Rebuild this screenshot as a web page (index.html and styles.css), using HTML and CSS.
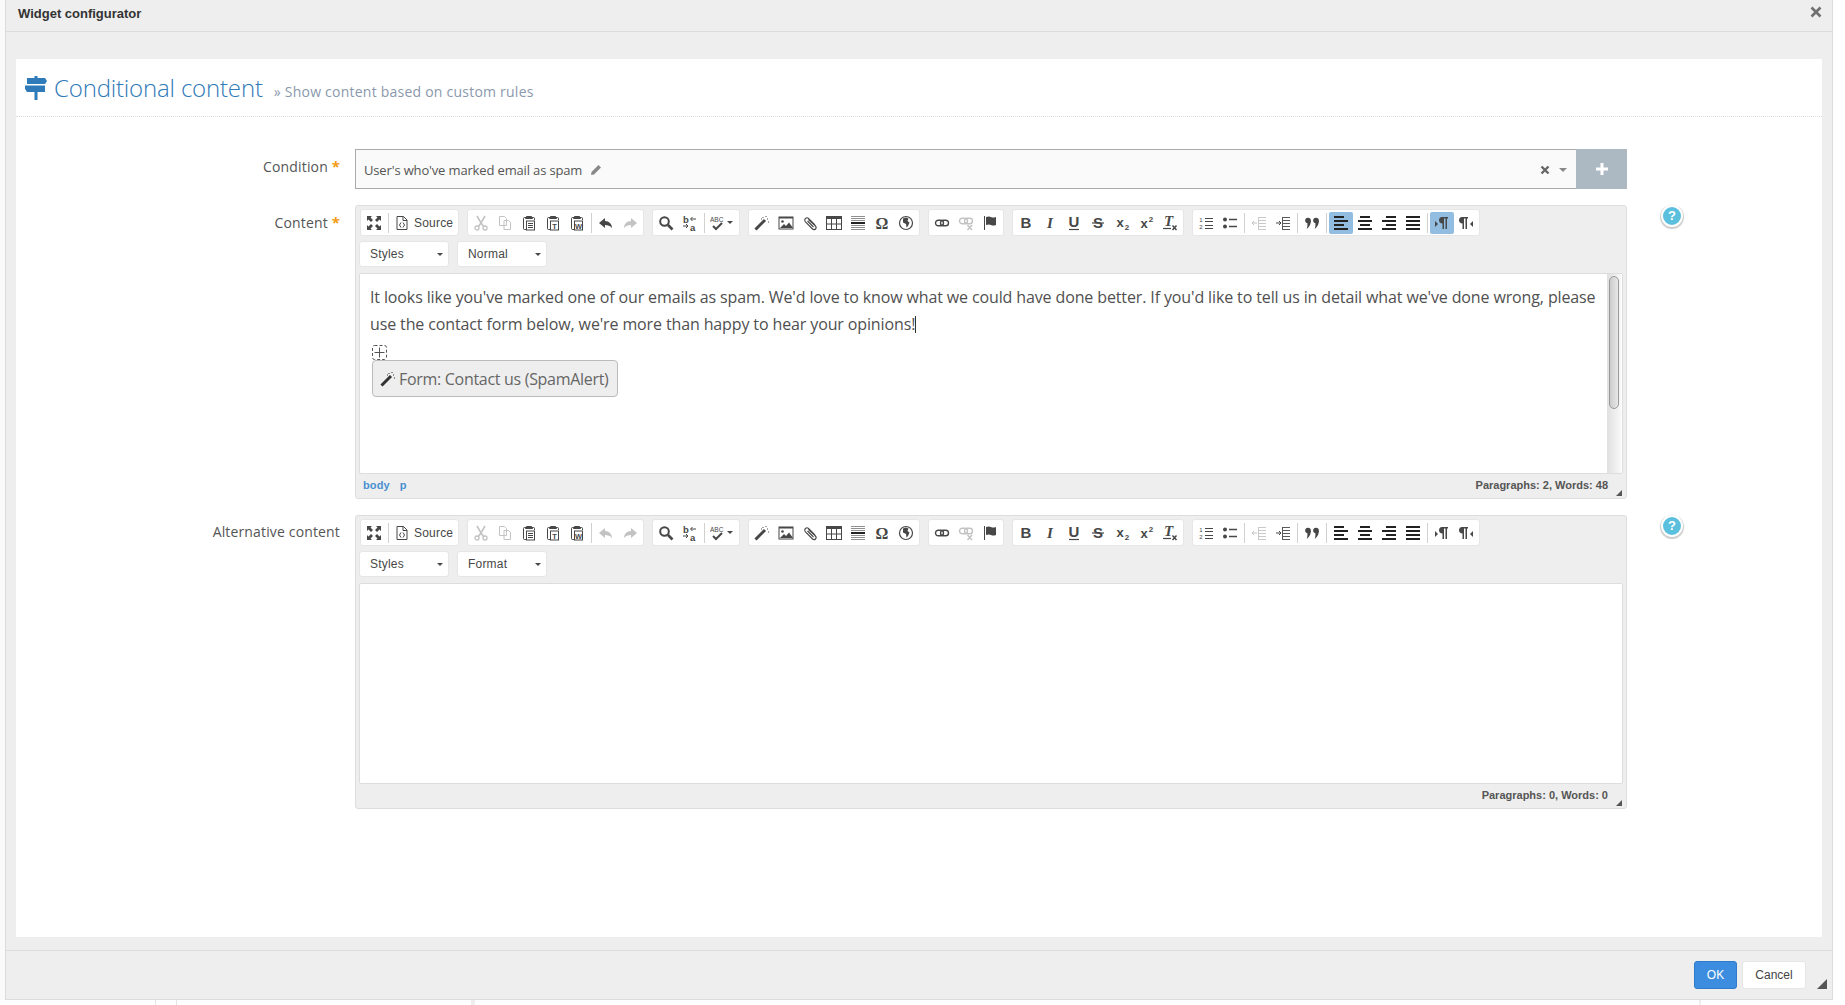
FILE: index.html
```html
<!DOCTYPE html>
<html lang="en">
<head>
<meta charset="utf-8">
<title>Widget configurator</title>
<link rel="stylesheet" href="styles.css">
</head>
<body>
<svg class="sprite" width="0" height="0" aria-hidden="true">
<defs>
<symbol id="i-max" viewBox="0 0 16 16"><path d="M1 1h5L4.500 2.500 7 5 5 7 2.500 4.500 1 6zM15 1v5l-1.500-1.500L11 7 9 5l2.500-2.500L10 1zM1 15v-5l1.500 1.500L5 9l2 2-2.500 2.500L6 15zM15 15h-5l1.500-1.500L9 11l2-2 2.500 2.500L15 10z" fill="currentColor"/></symbol>
<symbol id="i-source" viewBox="0 0 16 16"><path d="M3 1.500h6.500L13 5v9.500H3z" fill="none" stroke="currentColor"/><path d="M9 1.500V5.500h4" fill="none" stroke="currentColor"/><path d="M7 7.500 5.500 10 7 12.500M9 7.500l1.500 2.500L9 12.500" fill="none" stroke="currentColor"/></symbol>
<symbol id="i-cut" viewBox="0 0 16 16"><path d="M4 1l4 7 4-7M8 8l-3 4M8 8l3 4" fill="none" stroke="currentColor" stroke-width="1.600"/><circle cx="4" cy="13" r="2" fill="none" stroke="currentColor" stroke-width="1.300"/><circle cx="12" cy="13" r="2" fill="none" stroke="currentColor" stroke-width="1.300"/></symbol>
<symbol id="i-copy" viewBox="0 0 16 16"><path d="M2.500 1.500h5l2 2v7h-7zM7 5.500h4.500l2 2v7H7z" fill="#fff" stroke="currentColor"/></symbol>
<symbol id="i-paste" viewBox="0 0 16 16"><path d="M5 2.500H3.500q-1 0-1 1v10q0 1 1 1H5" fill="none" stroke="currentColor"/><path d="M5.500 1.500h5l1 2h-7z" fill="currentColor" stroke="currentColor"/><path d="M11 2.500h1.500q1 0 1 1V5" fill="none" stroke="currentColor"/><rect x="5.500" y="6" width="8" height="9" fill="#fff" stroke="currentColor"/><path d="M7 8.500h5M7 10.500h5M7 12.500h5" stroke="currentColor"/></symbol>
<symbol id="i-pastet" viewBox="0 0 16 16"><path d="M5 2.500H3.500q-1 0-1 1v10q0 1 1 1H5" fill="none" stroke="currentColor"/><path d="M5.500 1.500h5l1 2h-7z" fill="currentColor" stroke="currentColor"/><path d="M11 2.500h1.500q1 0 1 1V5" fill="none" stroke="currentColor"/><rect x="5.500" y="6" width="8" height="9" fill="#fff" stroke="currentColor"/><text x="9.500" y="13.500" class="ic-t">T</text></symbol>
<symbol id="i-pastew" viewBox="0 0 16 16"><path d="M5 2.500H3.500q-1 0-1 1v10q0 1 1 1H5" fill="none" stroke="currentColor"/><path d="M5.500 1.500h5l1 2h-7z" fill="currentColor" stroke="currentColor"/><path d="M11 2.500h1.500q1 0 1 1V5" fill="none" stroke="currentColor"/><rect x="5.500" y="6" width="8" height="9" fill="#fff" stroke="currentColor"/><text x="9.500" y="13.500" class="ic-t">W</text></symbol>
<symbol id="i-undo" viewBox="0 0 16 16"><path d="M7 3 1 8l6 5v-3c3 0 5 .8 7 3 0-4-3-7-7-7z" fill="currentColor"/></symbol>
<symbol id="i-redo" viewBox="0 0 16 16"><path d="M9 3l6 5-6 5v-3c-3 0-5 .8-7 3 0-4 3-7 7-7z" fill="currentColor"/></symbol>
<symbol id="i-find" viewBox="0 0 16 16"><circle cx="6.500" cy="6.500" r="4.300" fill="none" stroke="currentColor" stroke-width="2"/><path d="M10 10l4.500 4.500" stroke="currentColor" stroke-width="2.600"/></symbol>
<symbol id="i-replace" viewBox="0 0 16 16"><text x="1" y="7.500" class="ic-b">b</text><text x="8" y="15.500" class="ic-b">a</text><path d="M9 4h5M10.500 2 8.500 4l2 2M1 11h5M4 9l2 2-2 2" fill="none" stroke="currentColor"/></symbol>
<symbol id="i-spell" viewBox="0 0 16 16"><text x="0" y="7" class="ic-s">ABC</text><path d="M3 11l3 3 6-6" fill="none" stroke="currentColor" stroke-width="2"/></symbol>
<symbol id="i-wand" viewBox="0 0 16 16"><path d="M1.500 14.500 11 5" stroke="currentColor" stroke-width="3"/><path d="M9 2v2M12 1v2M14 4h-2M15 7h-2M7 4h1" stroke="currentColor" stroke-dasharray="1 1"/></symbol>
<symbol id="i-image" viewBox="0 0 16 16"><rect x="1" y="2" width="14" height="12" fill="#fff" stroke="currentColor"/><rect x="1" y="2" width="14" height="1.500" fill="currentColor"/><circle cx="4.500" cy="6.500" r="1.300" fill="currentColor"/><path d="M2 13l4-4 2 2 3-3.500 4 5.500z" fill="currentColor"/></symbol>
<symbol id="i-attach" viewBox="0 0 16 16"><path d="M13 10 6.500 3.500Q5 2 3.500 3.500T3.500 7l6.500 6.500q2 2 3.500.5t-.5-3.500L6.500 4.500M5.500 6l6 6" fill="none" stroke="currentColor" stroke-width="1.100"/></symbol>
<symbol id="i-table" viewBox="0 0 16 16"><rect x=".5" y="1.500" width="15" height="13" fill="none" stroke="currentColor"/><rect x="0" y="1" width="16" height="3" fill="currentColor"/><path d="M5.500 4v10M10.500 4v10M1 9h14" stroke="currentColor"/></symbol>
<symbol id="i-hr" viewBox="0 0 16 16"><path d="M1 1.500h14M1 3.500h14M1 5.500h14M1 10.500h14M1 12.500h14M1 14.500h14" stroke="currentColor" opacity=".6"/><rect x="1" y="7" width="14" height="2" fill="#222"/></symbol>
<symbol id="i-omega" viewBox="0 0 16 16"><text x="8" y="14" class="ic-o">Ω</text></symbol>
<symbol id="i-globe" viewBox="0 0 16 16"><circle cx="8" cy="8" r="6.500" fill="#fff" stroke="currentColor" stroke-width="1.200"/><path d="M5 3.500 8 2.500l2.500 1-1 2.500 2 1.500-1.500 3.500-1.500 1.500-.5-3.500-3-1.500z" fill="currentColor"/></symbol>
<symbol id="i-link" viewBox="0 0 16 16"><rect x="1.500" y="5.200" width="8" height="5.600" rx="2.800" fill="none" stroke="currentColor" stroke-width="1.400"/><rect x="6.500" y="5.200" width="8" height="5.600" rx="2.800" fill="none" stroke="currentColor" stroke-width="1.400"/></symbol>
<symbol id="i-unlink" viewBox="0 0 16 16"><rect x="1.500" y="3.200" width="8" height="5.600" rx="2.800" fill="none" stroke="currentColor" stroke-width="1.400"/><rect x="6.500" y="3.200" width="8" height="5.600" rx="2.800" fill="none" stroke="currentColor" stroke-width="1.400"/><path d="M9.500 10l4.500 5M14 10l-4.500 5" stroke="currentColor" stroke-width="1.500"/></symbol>
<symbol id="i-flag" viewBox="0 0 16 16"><path d="M2.500 1v14" stroke="currentColor"/><path d="M4 2q3-1 5 0t5 0v8q-3 1-5 0t-5 0z" fill="currentColor"/></symbol>
<symbol id="i-b" viewBox="0 0 16 16"><text x="8" y="13" class="ic-l ic-bold">B</text></symbol>
<symbol id="i-i" viewBox="0 0 16 16"><text x="8" y="13" class="ic-l ic-ital">I</text></symbol>
<symbol id="i-u" viewBox="0 0 16 16"><text x="8" y="12" class="ic-l ic-bold">U</text><path d="M3 14.500h10" stroke="currentColor" stroke-width="1.200"/></symbol>
<symbol id="i-s" viewBox="0 0 16 16"><text x="8" y="13" class="ic-l ic-bold">S</text><path d="M2 8h12" stroke="currentColor" stroke-width="1.200"/></symbol>
<symbol id="i-sub" viewBox="0 0 16 16"><text x="6" y="12" class="ic-m">x</text><text x="13" y="15" class="ic-sm">2</text></symbol>
<symbol id="i-sup" viewBox="0 0 16 16"><text x="6" y="13" class="ic-m">x</text><text x="13" y="7" class="ic-sm">2</text></symbol>
<symbol id="i-rf" viewBox="0 0 16 16"><text x="6.500" y="11" class="ic-l ic-ital">T</text><path d="M1 13.500h8" stroke="currentColor" stroke-width="1.200"/><path d="M10.500 10.500l4 4.500M14.500 10.500l-4 4.500" stroke="currentColor" stroke-width="1.500"/></symbol>
<symbol id="i-ol" viewBox="0 0 16 16"><text x="3" y="7" class="ic-n">1</text><text x="3" y="14" class="ic-n">2</text><path d="M7 3.500h8M7 6.500h8M7 10.500h8M7 13.500h8" stroke="currentColor" stroke-width="1.100"/></symbol>
<symbol id="i-ul" viewBox="0 0 16 16"><circle cx="3" cy="4.500" r="2" fill="currentColor"/><circle cx="3" cy="11.500" r="2" fill="currentColor"/><path d="M7 4.500h8M7 11.500h8" stroke="currentColor" stroke-width="1.500"/></symbol>
<symbol id="i-out" viewBox="0 0 16 16"><path d="M1 8h5M3 6 1 8l2 2" fill="none" stroke="currentColor"/><path d="M8 2.500h7M8 5.500h7M8 8.500h7M8 11.500h7M8 14.500h7M7.500 2v13" stroke="currentColor" stroke-width=".9"/></symbol>
<symbol id="i-ind" viewBox="0 0 16 16"><path d="M1 8h5M4 6l2 2-2 2" fill="none" stroke="currentColor"/><path d="M8 2.500h7M8 5.500h7M8 8.500h7M8 11.500h7M8 14.500h7M7.500 2v13" stroke="currentColor" stroke-width=".9"/></symbol>
<symbol id="i-quote" viewBox="0 0 16 16"><circle cx="4" cy="5.500" r="2.800" fill="currentColor"/><circle cx="12" cy="5.500" r="2.800" fill="currentColor"/><path d="M6.800 5.500q.3 5-4 8.500.9-3 .6-6zM14.800 5.500q.3 5-4 8.500.9-3 .6-6z" fill="currentColor"/></symbol>
<symbol id="i-left" viewBox="0 0 16 16"><path d="M1 2h10M1 6h14M1 10h10M1 14h14" stroke="#222" stroke-width="2"/></symbol>
<symbol id="i-center" viewBox="0 0 16 16"><path d="M3 2h10M1 6h14M3 10h10M1 14h14" stroke="#222" stroke-width="2"/></symbol>
<symbol id="i-right" viewBox="0 0 16 16"><path d="M5 2h10M1 6h14M5 10h10M1 14h14" stroke="#222" stroke-width="2"/></symbol>
<symbol id="i-just" viewBox="0 0 16 16"><path d="M1 2h14M1 6h14M1 10h14M1 14h14" stroke="#222" stroke-width="2"/></symbol>
<symbol id="i-ltr" viewBox="0 0 16 16"><path d="M1 6l3 3-3 3z" fill="currentColor"/><path d="M8 2h6v1.500h-1V14h-1.500V3.500H10V14H8.500V8.500Q5 8 5 5.200T8 2z" fill="currentColor"/></symbol>
<symbol id="i-rtl" viewBox="0 0 16 16"><path d="M15 6l-3 3 3 3z" fill="currentColor"/><path d="M4 2h6v1.500H9V14H7.500V3.500H6V14H4.500V8.500Q1 8 1 5.200T4 2z" fill="currentColor"/></symbol>
</defs>
</svg>

<div class="modal">
  <header class="modal-head">
    <h1 class="modal-title">Widget configurator</h1>
    <svg class="modal-close" viewBox="0 0 12 12"><path d="M1.500 1.500l9 9M10.500 1.500l-9 9" stroke="currentColor" stroke-width="2.600"/></svg>
  </header>
  <main class="modal-body">
    <section class="panel">
      <div class="page-head">
        <svg class="page-icon" viewBox="0 0 22 24"><path d="M9.500 0h3v2H20l2 3-2 3H2V2h7.500zM0 9.500h20v6.500h-7.500v8h-3v-8H2l-2-3z" fill="currentColor"/></svg>
        <span class="page-title">Conditional content</span>
        <span class="page-sub">» Show content based on custom rules</span>
      </div>
      <div class="form">
        <label class="lbl lbl-cond">Condition <span class="req">*</span></label>
        <div class="selector">
          <div class="selector-value">
            <span>User's who've marked email as spam</span>
            <svg class="sel-pencil" viewBox="0 0 12 12"><path d="M8.500 1l2.500 2.500L4 10.500 1 11l.5-3z" fill="currentColor"/></svg>
            <span class="sel-spacer"></span>
            <svg class="sel-x" viewBox="0 0 10 10"><path d="M1.500 1.500l7 7M8.500 1.500l-7 7" stroke="currentColor" stroke-width="2.400"/></svg>
            <span class="sel-caret"></span>
          </div>
          <div class="selector-add"><svg class="plus" viewBox="0 0 14 14"><path d="M7 1v12M1 7h12" stroke="currentColor" stroke-width="3"/></svg></div>
        </div>
        <span class="help-cell"></span>

        <label class="lbl lbl-ed">Content <span class="req">*</span></label>
        <div class="editor">
          <div class="tb">
            <div class="grp"><span class="btn"><svg><use href="#i-max"/></svg></span><i class="sep"></i><span class="btn btn-src"><svg><use href="#i-source"/></svg><span>Source</span></span></div>
            <div class="grp"><span class="btn off"><svg><use href="#i-cut"/></svg></span><span class="btn off"><svg><use href="#i-copy"/></svg></span><span class="btn"><svg><use href="#i-paste"/></svg></span><span class="btn"><svg><use href="#i-pastet"/></svg></span><span class="btn"><svg><use href="#i-pastew"/></svg></span><i class="sep"></i><span class="btn"><svg><use href="#i-undo"/></svg></span><span class="btn off"><svg><use href="#i-redo"/></svg></span></div>
            <div class="grp"><span class="btn"><svg><use href="#i-find"/></svg></span><span class="btn"><svg><use href="#i-replace"/></svg></span><i class="sep"></i><span class="btn btn-spell"><svg><use href="#i-spell"/></svg><b class="mini-caret"></b></span></div>
            <div class="grp"><span class="btn"><svg><use href="#i-wand"/></svg></span><span class="btn"><svg><use href="#i-image"/></svg></span><span class="btn"><svg><use href="#i-attach"/></svg></span><span class="btn"><svg><use href="#i-table"/></svg></span><span class="btn"><svg><use href="#i-hr"/></svg></span><span class="btn"><svg><use href="#i-omega"/></svg></span><span class="btn"><svg><use href="#i-globe"/></svg></span></div>
            <div class="grp"><span class="btn"><svg><use href="#i-link"/></svg></span><span class="btn off"><svg><use href="#i-unlink"/></svg></span><span class="btn"><svg><use href="#i-flag"/></svg></span></div>
            <div class="grp"><span class="btn"><svg><use href="#i-b"/></svg></span><span class="btn"><svg><use href="#i-i"/></svg></span><span class="btn"><svg><use href="#i-u"/></svg></span><span class="btn"><svg><use href="#i-s"/></svg></span><span class="btn"><svg><use href="#i-sub"/></svg></span><span class="btn"><svg><use href="#i-sup"/></svg></span><span class="btn"><svg><use href="#i-rf"/></svg></span></div>
            <div class="grp"><span class="btn"><svg><use href="#i-ol"/></svg></span><span class="btn"><svg><use href="#i-ul"/></svg></span><i class="sep"></i><span class="btn off"><svg><use href="#i-out"/></svg></span><span class="btn"><svg><use href="#i-ind"/></svg></span><i class="sep"></i><span class="btn"><svg><use href="#i-quote"/></svg></span><i class="sep"></i><span class="btn on"><svg><use href="#i-left"/></svg></span><span class="btn"><svg><use href="#i-center"/></svg></span><span class="btn"><svg><use href="#i-right"/></svg></span><span class="btn"><svg><use href="#i-just"/></svg></span><i class="sep"></i><span class="btn on"><svg><use href="#i-ltr"/></svg></span><span class="btn"><svg><use href="#i-rtl"/></svg></span></div>
          </div>
          <div class="tb-row2">
            <div class="combo"><span>Styles</span><b class="mini-caret"></b></div>
            <div class="combo"><span>Normal</span><b class="mini-caret"></b></div>
          </div>
          <div class="content content-main">
            <div class="doc">
              <p class="doc-p">It looks like you've marked one of our emails as spam. We'd love to know what we could have done better. If you'd like to tell us in detail what we've done wrong, please use the contact form below, we're more than happy to hear your opinions!<span class="cursor"></span></p>
              <svg class="drag" viewBox="0 0 15 15"><rect x=".5" y=".5" width="14" height="14" rx="2" fill="none" stroke="#555" stroke-dasharray="3 2"/><path d="M7.500 2.500v10M2.500 7.500h10" stroke="#555"/></svg>
              <div class="widget-box"><svg class="wg-ic"><use href="#i-wand"/></svg><span>Form: Contact us (SpamAlert)</span></div>
            </div>
            <div class="sbar"><div class="sthumb"></div></div>
          </div>
          <div class="status"><span class="path">body</span><span class="path">p</span><span class="status-fill"></span><span class="count">Paragraphs: 2, Words: 48</span><b class="grip"></b></div>
        </div>
        <div class="help-cell"><span class="help">?</span></div>

        <label class="lbl lbl-ed">Alternative content</label>
        <div class="editor">
          <div class="tb">
            <div class="grp"><span class="btn"><svg><use href="#i-max"/></svg></span><i class="sep"></i><span class="btn btn-src"><svg><use href="#i-source"/></svg><span>Source</span></span></div>
            <div class="grp"><span class="btn off"><svg><use href="#i-cut"/></svg></span><span class="btn off"><svg><use href="#i-copy"/></svg></span><span class="btn"><svg><use href="#i-paste"/></svg></span><span class="btn"><svg><use href="#i-pastet"/></svg></span><span class="btn"><svg><use href="#i-pastew"/></svg></span><i class="sep"></i><span class="btn off"><svg><use href="#i-undo"/></svg></span><span class="btn off"><svg><use href="#i-redo"/></svg></span></div>
            <div class="grp"><span class="btn"><svg><use href="#i-find"/></svg></span><span class="btn"><svg><use href="#i-replace"/></svg></span><i class="sep"></i><span class="btn btn-spell"><svg><use href="#i-spell"/></svg><b class="mini-caret"></b></span></div>
            <div class="grp"><span class="btn"><svg><use href="#i-wand"/></svg></span><span class="btn"><svg><use href="#i-image"/></svg></span><span class="btn"><svg><use href="#i-attach"/></svg></span><span class="btn"><svg><use href="#i-table"/></svg></span><span class="btn"><svg><use href="#i-hr"/></svg></span><span class="btn"><svg><use href="#i-omega"/></svg></span><span class="btn"><svg><use href="#i-globe"/></svg></span></div>
            <div class="grp"><span class="btn"><svg><use href="#i-link"/></svg></span><span class="btn off"><svg><use href="#i-unlink"/></svg></span><span class="btn"><svg><use href="#i-flag"/></svg></span></div>
            <div class="grp"><span class="btn"><svg><use href="#i-b"/></svg></span><span class="btn"><svg><use href="#i-i"/></svg></span><span class="btn"><svg><use href="#i-u"/></svg></span><span class="btn"><svg><use href="#i-s"/></svg></span><span class="btn"><svg><use href="#i-sub"/></svg></span><span class="btn"><svg><use href="#i-sup"/></svg></span><span class="btn"><svg><use href="#i-rf"/></svg></span></div>
            <div class="grp"><span class="btn"><svg><use href="#i-ol"/></svg></span><span class="btn"><svg><use href="#i-ul"/></svg></span><i class="sep"></i><span class="btn off"><svg><use href="#i-out"/></svg></span><span class="btn"><svg><use href="#i-ind"/></svg></span><i class="sep"></i><span class="btn"><svg><use href="#i-quote"/></svg></span><i class="sep"></i><span class="btn"><svg><use href="#i-left"/></svg></span><span class="btn"><svg><use href="#i-center"/></svg></span><span class="btn"><svg><use href="#i-right"/></svg></span><span class="btn"><svg><use href="#i-just"/></svg></span><i class="sep"></i><span class="btn"><svg><use href="#i-ltr"/></svg></span><span class="btn"><svg><use href="#i-rtl"/></svg></span></div>
          </div>
          <div class="tb-row2">
            <div class="combo"><span>Styles</span><b class="mini-caret"></b></div>
            <div class="combo"><span>Format</span><b class="mini-caret"></b></div>
          </div>
          <div class="content content-alt"></div>
          <div class="status"><span class="status-fill"></span><span class="count">Paragraphs: 0, Words: 0</span><b class="grip"></b></div>
        </div>
        <div class="help-cell"><span class="help">?</span></div>
      </div>
    </section>
  </main>
  <footer class="modal-foot">
    <button class="b-ok">OK</button>
    <button class="b-cancel">Cancel</button>
    <b class="foot-grip"></b>
  </footer>
</div>
<div class="under">
  <i class="under-a"></i><i class="under-b"></i><i class="under-c"></i><i class="under-d"></i>
</div>
</body>
</html>
```
FILE: styles.css
```css
* { box-sizing: border-box; }
html, body { margin: 0; padding: 0; }
body {
  width: 1845px;
  height: 1005px;
  overflow: hidden;
  background: #fff;
  font-family: "Open Sans", "Noto Sans", sans-serif;
  color: #555;
}
.sprite { display: block; height: 0; }

.modal {
  width: 1828px;
  height: 1000px;
  margin-left: 5px;
  display: flex;
  flex-direction: column;
  background: #eee;
  border-left: 1px solid #dcdcdc;
  border-right: 1px solid #dcdcdc;
  border-bottom: 1px solid #dcdcdc;
  box-shadow: -5px 0 0 #fafafa;
}
.modal-head {
  height: 32px;
  flex: none;
  display: flex;
  align-items: center;
  justify-content: space-between;
  padding: 0 10px 7px 12px;
  border-bottom: 1px solid #dcdcdc;
}
.modal-title {
  margin: 2px 0 0;
  font: bold 13px "Liberation Sans", sans-serif;
  color: #333;
}
.modal-close { width: 12px; height: 12px; color: #707070; }
.modal-body {
  flex: 1;
  padding: 27px 10px 13px 10px;
  display: flex;
  min-height: 0;
}
.panel {
  flex: 1;
  background: #fff;
}
.page-head {
  height: 58px;
  display: flex;
  align-items: baseline;
  padding: 12px 0 0 9px;
  border-bottom: 1px dotted #ddd;
}
.page-icon {
  width: 22px;
  height: 24px;
  color: #2f7ab8;
  align-self: flex-start;
  margin-top: 5px;
  margin-right: 7px;
}
.page-title {
  font-size: 24px;
  font-weight: 300;
  color: #2f7ab8;
  letter-spacing: -.17px;
  margin-right: 11px;
}
.page-sub {
  font-size: 14px;
  letter-spacing: .23px;
  color: #8a99ad;
}
.form {
  display: grid;
  grid-template-columns: 324px 1272px 1fr;
  column-gap: 15px;
  row-gap: 16px;
  padding-top: 32px;
}
.lbl {
  text-align: right;
  font-size: 14px;
  letter-spacing: .15px;
  color: #555;
  white-space: nowrap;
}
.lbl-cond { padding-top: 7px; }
.lbl-ed { padding-top: 7px; }
.req { color: #f39c12; font-weight: bold; font-size: 15px; }

.selector { display: flex; height: 40px; }
.selector-value {
  flex: 1;
  display: flex;
  align-items: center;
  padding: 1px 9px 0 8px;
  background: #fafafa;
  border: 1px solid #aaa;
  border-right: 0;
  font-size: 13px;
  letter-spacing: -.15px;
  color: #555;
}
.sel-pencil { width: 12px; height: 12px; margin-left: 8px; color: #888; }
.sel-spacer { flex: 1; }
.sel-x { width: 10px; height: 10px; color: #666; margin-right: 9px; }
.sel-caret {
  width: 0;
  height: 0;
  border-left: 4px solid transparent;
  border-right: 4px solid transparent;
  border-top: 4px solid #888;
}
.selector-add {
  width: 51px;
  background: #acb9c2;
  display: flex;
  align-items: center;
  justify-content: center;
}
.plus { width: 14px; height: 14px; color: #fff; }

.editor {
  border: 1px solid #ddd;
  border-radius: 3px;
  background: #eee;
  padding: 3px 3px 0 3px;
}
.tb { display: flex; height: 28px; gap: 8px; margin-left: 1px; }
.grp {
  height: 27px;
  display: flex;
  align-items: center;
  padding: 0 1px;
  background: #fff;
  border: 1px solid #e6e6e6;
  border-radius: 3px;
  color: #474747;
}
.btn {
  width: 24px;
  height: 22px;
  flex: none;
  display: flex;
  align-items: center;
  justify-content: center;
  border-radius: 2px;
}
.btn svg { width: 16px; height: 16px; flex: none; overflow: visible; }
.btn.off svg { opacity: .32; }
.btn.on { background: #92bce0; }
.btn-src {
  width: 66px;
  justify-content: flex-start;
  gap: 4px;
  padding-left: 3px;
  font: 12px "Liberation Sans", sans-serif;
  letter-spacing: .2px;
  color: #474747;
}
.btn-spell { width: 31px; justify-content: flex-start; padding-left: 3px; gap: 1px; }
.sep { width: 1px; height: 20px; margin: 0 2px; background: #d1d1d1; flex: none; }
.mini-caret {
  display: block;
  width: 0;
  height: 0;
  border-left: 3px solid transparent;
  border-right: 3px solid transparent;
  border-top: 3px solid #484848;
}
.ic-t, .ic-b, .ic-s, .ic-o, .ic-l, .ic-m, .ic-sm, .ic-n { fill: currentColor; font-family: "Liberation Sans", sans-serif; }
.ic-t { font-size: 7.500px; font-weight: bold; text-anchor: middle; }
.ic-b { font-size: 9.500px; font-weight: bold; }
.ic-s { font-size: 6.500px; }
.ic-o { font-size: 16px; font-weight: bold; text-anchor: middle; font-family: "Liberation Serif", serif; }
.ic-l { font-size: 15px; text-anchor: middle; }
.ic-bold { font-weight: bold; }
.ic-ital { font-weight: bold; font-style: italic; font-family: "Liberation Serif", serif; }
.ic-m { font-size: 13px; font-weight: bold; text-anchor: middle; }
.ic-sm { font-size: 8px; font-weight: bold; text-anchor: middle; }
.ic-n { font-size: 6px; text-anchor: middle; }

.tb-row2 { display: flex; gap: 8px; margin: 4px 0 0 0; height: 26px; }
.combo {
  width: 90px;
  height: 26px;
  display: flex;
  align-items: center;
  justify-content: space-between;
  padding: 0 5px 0 10px;
  background: #fff;
  border: 1px solid #e6e6e6;
  border-radius: 3px;
  font: 12px "Liberation Sans", sans-serif;
  letter-spacing: .2px;
  color: #474747;
}
.content {
  margin-top: 6px;
  background: #fff;
  border: 1px solid #ddd;
  border-radius: 2px;
  display: flex;
}
.content-main { height: 201px; }
.content-alt { height: 201px; }
.doc { flex: 1; padding: 10px 0 0 10px; min-width: 0; }
.doc-p {
  margin: 0;
  font-size: 16px;
  line-height: 27px;
  letter-spacing: -.125px;
  color: #505050;
}
.cursor { display: inline-block; width: 1px; height: 17px; background: #333; vertical-align: -3px; }
.drag { display: block; width: 15px; height: 15px; margin: 7px 0 0 2px; }
.widget-box {
  width: 246px;
  height: 37px;
  margin-left: 2px;
  display: flex;
  align-items: center;
  gap: 3px;
  padding-left: 7px;
  background: #eee;
  border: 1px solid #bbb;
  border-radius: 4px;
  font-size: 16px;
  letter-spacing: -.3px;
  white-space: nowrap;
  color: #666;
}
.wg-ic { width: 16px; height: 16px; color: #333; flex: none; }
.sbar {
  width: 14px;
  margin-right: 1px;
  flex: none;
  background: linear-gradient(to right, #e0e0e0, #f8f8f8);
}
.sthumb {
  margin: 2px 2px 0 2px;
  height: 133px;
  background: linear-gradient(to right, #ccc, #e8e8e8);
  border: 1px solid #999;
  border-radius: 5px;
}
.status {
  height: 24px;
  display: flex;
  align-items: center;
  gap: 10px;
  padding: 0 0 3px 4px;
  position: relative;
  font: bold 11px "Liberation Sans", sans-serif;
}
.path { color: #4a90d0; letter-spacing: .1px; }
.status-fill { flex: 1; }
.count { color: #555; padding-right: 15px; }
.grip {
  position: absolute;
  right: 1px;
  bottom: 2px;
  width: 0;
  height: 0;
  border-left: 6px solid transparent;
  border-bottom: 6px solid #555;
}
.help-cell { padding: 0 0 0 19px; }
.help {
  display: block;
  width: 22px;
  height: 22px;
  border-radius: 50%;
  background: #5bc0de;
  border: 2px solid #fff;
  box-shadow: 0 1px 1px 1px #ccc;
  color: #fff;
  font: bold 13px/18px "Liberation Sans", sans-serif;
  text-align: center;
}
.modal-foot {
  height: 49px;
  flex: none;
  display: flex;
  align-items: flex-start;
  justify-content: flex-end;
  padding: 10px 5px 0 0;
  border-top: 1px solid #dcdcdc;
  font: 12px "Liberation Sans", sans-serif;
}
.modal-foot button { font: inherit; height: 28px; border-radius: 3px; padding: 0; }
.b-ok { width: 43px; background: #3c8ddf; border: 1px solid #2e7bc9; color: #fff; }
.b-cancel { width: 64px; margin-left: 5px; background: #fff; border: 1px solid #e6e6e6; color: #444; }
.foot-grip {
  width: 0;
  height: 0;
  margin: 18px 0 0 11px;
  border-left: 10px solid transparent;
  border-bottom: 10px solid #555;
}
.under { height: 5px; display: flex; }
.under i { display: block; height: 5px; background: #e4e4e4; width: 1px; }
.under-a { margin-left: 155px; }
.under-b { margin-left: 20px; }
.under-c { margin-left: 294px; width: 4px !important; background: #eee !important; }
.under-d { margin-left: 1224px; width: 2px !important; background: #eee !important; }
```
